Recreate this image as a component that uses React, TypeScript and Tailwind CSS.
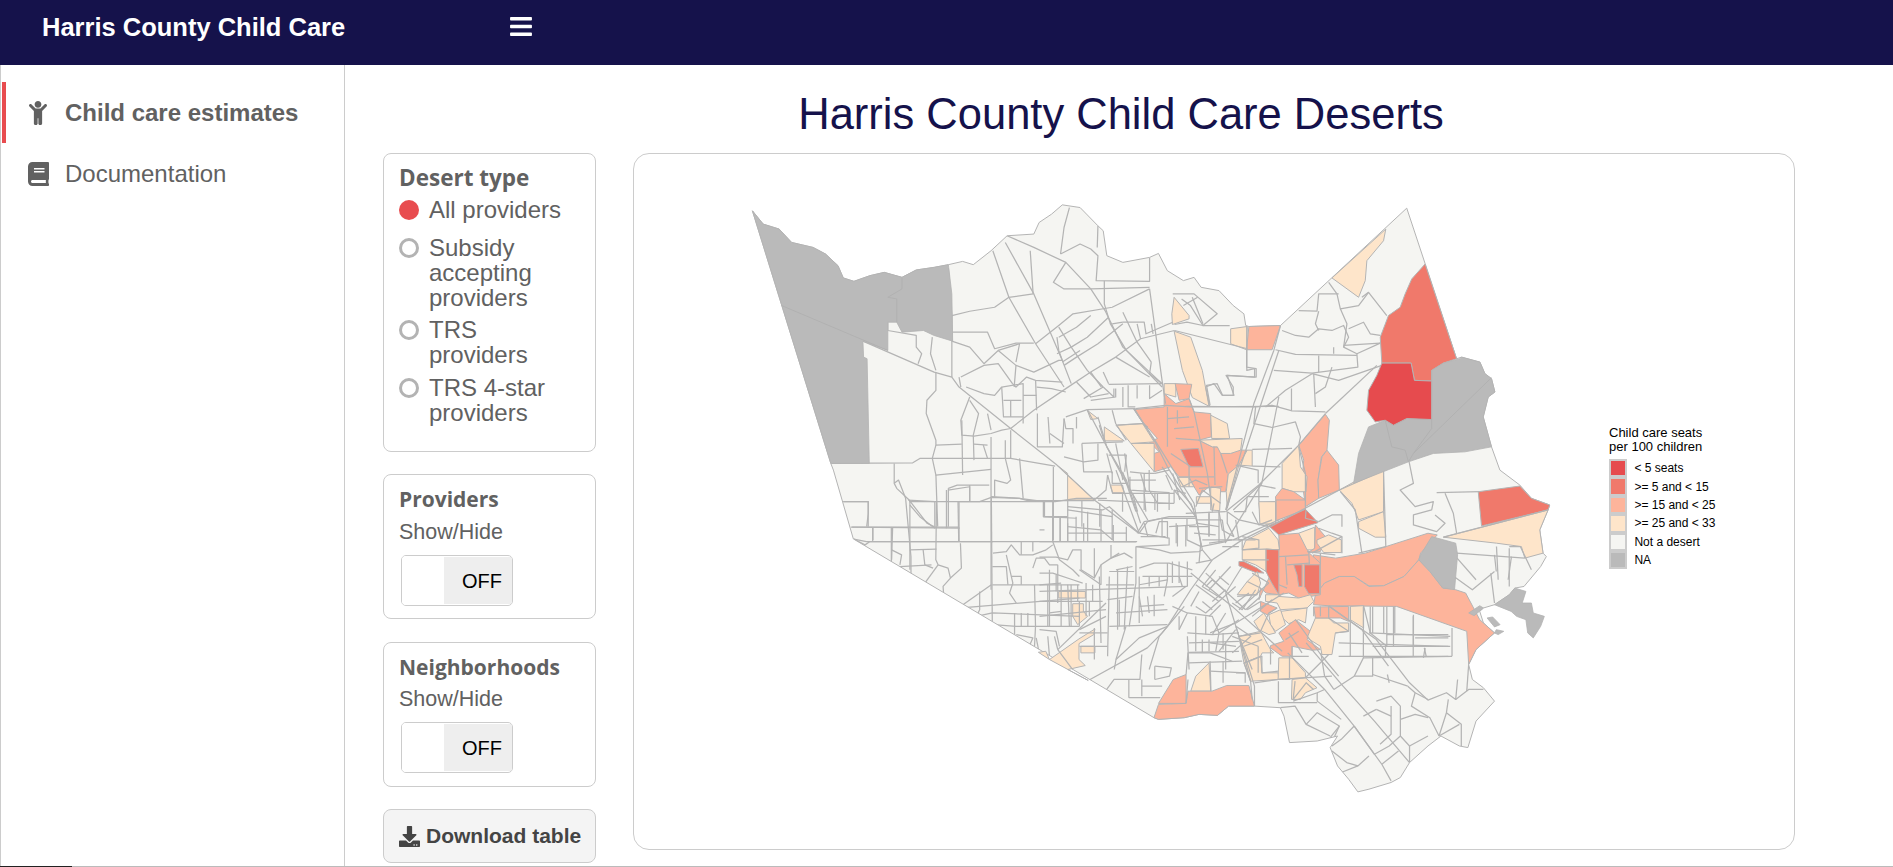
import { FaBars, FaBook, FaChild, FaDownload } from "react-icons/fa";

// reference crops the map was traced from: [originX, originY, scaleX, scaleY]
const ZONES = {
  a: [720, 190, 2.8, 3],
  b: [1100, 190, 3, 3],
  c: [1000, 480, 2.7, 3],
  d: [1040, 470, 3, 3],
  e: [1190, 500, 3, 3],
  f: [820, 470, 3, 3],
} as const;
type Zone = keyof typeof ZONES;

const RED = "#e64b4e";
const SALMON = "#f0796b";
const LIGHT = "#fdb49b";
const PEACH = "#fee5ca";
const BASE = "#f5f5f2";
const NA = "#bababa";

function conv(zone: Zone, str: string): string[] {
  const [ox, oy, sx, sy] = ZONES[zone];
  return str.trim().split(/\s+/).map((p) => {
    const [x, y] = p.split(",").map(Number);
    return `${(ox + x / sx).toFixed(1)} ${(oy + y / sy).toFixed(1)}`;
  });
}
const line = (zone: Zone, str: string) => "M" + conv(zone, str).join("L");
const poly = (zone: Zone, str: string) => line(zone, str) + "Z";

const OUTLINE =
  "M" +
  [
    ...conv("a", "90,60 120,100 165,115 200,155 260,170 295,190 330,225 345,262 375,272 420,255 460,245 510,260 550,238 600,230 640,222 680,212 710,222 760,180 805,135 880,130 895,95 930,70 960,42 1010,50 1060,105 1075,120 1085,195 1130,215 1205,200 1230,188 1255,240 1300,270 1330,260 1350,290 1400,300 1440,345 1470,370 1475,405"),
    ...conv("b", "450,408 545,405 925,52 1075,505 1090,500 1145,515 1160,550 1180,565 1190,605 1170,620 1155,680 1180,770 1205,840 1265,885 1300,925 1355,945 1350,960 1325,1020 1335,1090 1345,1100"),
    ...conv("c", "1465,260 1420,320 1395,325 1380,345 1340,375 1310,385 1300,395 1310,430 1340,460 1290,510 1270,555 1280,600 1310,625 1340,665 1290,725 1268,805 1245,800 1195,770 1160,800 1110,850 1085,895 1060,910 1000,930 970,938 945,900 915,860 895,805 915,770 860,785 785,790 770,710 760,685 690,680 620,680 590,708 540,705 500,715 430,720 418,715"),
    ...conv("f", "100,207 40,0"),
    ...conv("a", "310,820"),
  ].join("L") +
  "Z";

const FILLS: [Zone, string, string][] = [
  // north east
  ["b", SALMON, "980,220 1075,505 1035,518 1000,540 1000,572 948,570 938,518 850,518 845,440 870,375 905,350 920,310 940,265"],
  ["b", SALMON, "1140,905 1265,888 1300,925 1355,945 1350,960 1150,1008"],
  ["b", PEACH, "1350,960 1325,1020 1335,1090 1280,1105 1270,1070 1195,1060 1035,1042"],
  ["b", PEACH, "700,262 862,115 855,150 805,210 800,270 780,320"],
  ["b", LIGHT, "450,408 545,405 520,478 443,478"],
  ["b", PEACH, "395,415 445,408 443,478 395,460"],
  ["b", PEACH, "225,320 270,375 270,385 220,402 218,370"],
  ["b", PEACH, "225,422 275,440 310,540 330,648 280,622 250,540"],
  ["b", LIGHT, "600,765 680,672 692,690 685,780 668,800 658,870 660,925 620,950 610,870 615,810"],
  ["b", LIGHT, "685,780 720,825 722,900 660,925 658,870 670,800"],
  ["b", PEACH, "550,820 600,765 605,830 625,860 622,905 585,905 550,895"],
  ["b", LIGHT, "530,920 550,895 585,905 620,930 620,960 535,990"],
  ["b", PEACH, "480,938 530,935 530,995 510,1010 485,990"],
  ["b", PEACH, "722,900 830,840 855,840 855,965 780,990 760,940"],
  ["b", PEACH, "780,995 855,965 862,1042 830,1042 780,1015"],
  // north central cluster
  ["b", LIGHT, "105,658 195,650 195,610 230,640 270,625 285,665 335,670 337,740 298,750 340,770 360,770 365,790 395,790 420,780 445,780 420,825 388,852 380,905 365,905 330,890 300,915 285,890 270,860 240,860 215,830 165,845 165,790 180,785 150,755 175,745 125,690"],
  ["b", PEACH, "50,705 130,700 165,755 95,760"],
  ["b", PEACH, "95,760 165,760 165,845"],
  ["b", PEACH, "15,710 75,752 15,752"],
  ["b", PEACH, "335,675 385,700 392,745 338,745"],
  ["b", PEACH, "300,750 430,745 425,780 395,790 365,790 355,770 340,770"],
  ["b", PEACH, "195,580 230,580 230,620 195,610"],
  ["b", LIGHT, "228,580 278,582 270,625 240,630"],
  ["b", SALMON, "245,778 298,775 312,830 270,830"],
  ["b", PEACH, "445,780 460,780 460,828 420,825"],
  ["b", PEACH, "388,852 420,825 385,955 382,905"],
  ["b", PEACH, "335,890 365,895 362,962 335,960"],
  ["b", PEACH, "292,920 335,920 335,940 292,940"],
  ["b", PEACH, "235,862 268,862 285,890 245,890"],
  ["b", PEACH, "33,885 70,885 75,908 40,908"],
  ["a", PEACH, "945,825 1050,930 975,930 975,850"],
  ["a", PEACH, "1030,660 1060,685 1040,688"],
  // east central, the two big tracts reach the coast
  ["c", LIGHT, "850,225 910,235 990,220 1160,160 1185,165 1140,220 1135,240 1095,290 1040,318 1000,318 960,290 920,290 880,310 855,345 850,300"],
  ["c", LIGHT, "1000,320 1040,318 1095,290 1135,240 1165,275 1200,325 1235,330 1262,340 1300,420 1340,460 1290,510 1270,555 1265,455 1075,380 890,378 850,375 855,345 880,310 920,290 960,290"],
  ["e", LIGHT, "262,0 350,0 350,28 262,62"],
  ["e", PEACH, "210,5 260,5 260,72 213,72"],
  ["e", PEACH, "170,122 240,85 268,120 272,150 232,148 160,150"],
  ["e", PEACH, "160,150 232,148 232,215 200,195 160,180"],
  ["e", LIGHT, "270,105 330,100 362,160 395,190 395,285 365,290 330,295 300,280 270,285 232,215 232,148 272,150"],
  ["e", SALMON, "240,78 350,28 388,68 270,105"],
  ["e", SALMON, "232,148 270,150 270,285 250,255 232,215"],
  ["e", SALMON, "150,185 165,185 205,205 225,220 200,218 150,198"],
  ["e", SALMON, "315,195 340,195 340,260 330,260 325,225"],
  ["e", SALMON, "347,195 393,195 393,282 360,282 347,260"],
  ["e", PEACH, "330,100 378,82 378,150 355,150"],
  ["e", LIGHT, "380,75 410,110 395,155 358,158 378,145"],
  ["e", PEACH, "385,120 420,105 458,120 458,158 405,158 385,130"],
  ["e", LIGHT, "210,300 240,235 270,285 232,280 215,265"],
  ["e", PEACH, "230,285 270,285 270,290 330,295 365,285 375,305 355,325 275,330 265,310 230,305"],
  ["e", PEACH, "275,335 355,325 350,370 330,360 300,372 275,350"],
  ["e", LIGHT, "215,305 265,325 235,345 215,335"],
  ["e", PEACH, "240,345 275,330 290,375 260,395 245,375"],
  ["e", PEACH, "195,365 225,340 260,400 240,405 210,390"],
  ["e", PEACH, "175,245 205,215 215,250 205,285 145,285"],
  ["e", LIGHT, "270,400 320,360 365,395 355,420 395,450 370,452 310,440 310,470 280,470 245,445 245,438 285,425"],
  ["e", PEACH, "150,410 215,395 245,450 255,460 220,460 215,470 165,490"],
  ["e", PEACH, "380,355 420,355 435,370 480,370 480,395 440,400 430,465 400,465 395,440 355,415"],
  ["e", LIGHT, "375,322 480,320 480,365 455,355 420,355 380,355"],
  ["e", PEACH, "485,320 525,318 525,385 485,360"],
  ["e", PEACH, "165,490 215,470 220,520 268,520 270,540 185,545"],
  ["e", PEACH, "270,475 310,475 350,520 350,535 268,540"],
  ["e", PEACH, "310,540 350,535 385,565 350,580 335,600 308,600"],
  ["e", PEACH, "20,530 60,490 65,575 5,575"],
  // south
  ["c", LIGHT, "470,600 505,585 505,672 430,672"],
  ["c", LIGHT, "430,675 505,672 510,635 575,635 615,618 675,618 690,680 620,680 590,708 540,705 500,715 430,720 418,715"],
  ["c", PEACH, "135,540 215,478 258,448 255,465 215,492 215,540 232,558 185,570 240,603"],
  ["c", PEACH, "105,518 125,515 135,540"],
  ["c", PEACH, "220,500 258,500 258,520 220,520"],
  ["d", PEACH, "58,365 138,365 138,385 58,385"],
  ["d", PEACH, "100,402 132,402 132,425 145,440 115,465 100,440"],
];

const ROADS: Record<Zone, string[]> = {
  a: [
    "400,452 600,545 650,560 670,590 815,715 945,825 1050,930 1175,1030",
    "640,232 650,375 650,560",
    "650,375 700,362 770,350 810,320 878,310 870,180",
    "652,425 750,425 770,475 830,458 880,458",
    "800,155 880,310 960,510 985,580",
    "765,180 810,320 885,460 965,590",
    "805,135 880,170 970,215 1040,295 1080,360 1130,470 1240,580",
    "970,215 935,275 965,295 1040,295 1205,290",
    "955,190 965,110 980,50",
    "955,190 1010,160 1040,175 1060,195 1055,270 1205,272 1205,200",
    "1060,105 1058,170",
    "1078,270 1078,340 1095,400 1140,480 1240,590",
    "1205,295 1100,350 990,370 950,405 885,460",
    "1130,365 1170,455 1210,515",
    "1040,375 1000,410 950,440",
    "1090,380 1030,440 985,470 945,490",
    "1130,400 1060,460 1000,500 965,525",
    "950,410 985,470 1030,540 1075,590",
    "1130,395 1190,395 1195,430 1270,395",
    "1275,420 1180,445 1110,500 1040,545 970,595 880,660 815,715",
    "1275,420 1480,475",
    "1478,405 1478,540 1500,535 1500,560 1420,555 1440,590 1440,615 1410,615 1395,580 1365,585 1375,645",
    "1270,310 1330,310 1395,370 1355,405 1320,345 1295,325",
    "1325,320 1355,400",
    "1300,345 1340,320",
    "1430,405 1355,405 1310,395 1275,402",
    "1205,295 1240,570 1250,640",
    "1090,582 1240,580",
    "1105,595 1105,620 1075,590",
    "1145,585 1145,650 1165,650",
    "1170,585 1170,625",
    "1205,585 1205,625 1240,600",
    "1210,515 1205,550 1240,580",
    "1165,655 1250,645 1320,650 1568,648",
    "1030,658 1165,655",
    "970,680 1030,658",
    "1030,658 1090,780 1140,880 1200,990",
    "1060,680 1085,770 1140,870 1180,1000",
    "1160,655 1220,750 1330,940 1350,1070",
    "1568,480 1500,700 1420,960",
    "1568,620 1520,880 1440,960",
    "1520,880 1420,1055",
    "470,395 470,420 550,435 550,470 565,490 555,520",
    "595,440 590,490 605,540",
    "650,452 700,470 740,520 780,480 830,525 880,545 950,510 960,510",
    "675,560 740,525 780,520 820,580 830,590 860,560 885,570 960,575",
    "670,560 675,590",
    "780,480 840,460 830,515",
    "690,590 740,610 770,615 790,590 850,580 850,700",
    "790,590 795,680 850,680",
    "795,630 845,630",
    "815,630 815,680",
    "885,570 888,660",
    "850,615 888,615",
    "888,590 930,595 970,605",
    "1020,625 1075,590",
    "700,620 675,690 678,735 712,738 760,730 790,720 815,715",
    "700,630 725,670 710,735 712,810",
    "750,670 760,720",
    "605,545 605,600 580,630 578,670 605,750 605,765 678,762",
    "605,765 595,805 605,855 760,838",
    "678,690 680,855",
    "312,820 540,818 560,805 815,805 940,828",
    "760,740 760,1200",
    "815,720 815,805",
    "800,750 800,805 815,870 805,880 770,870 770,920",
    "738,765 750,805",
    "712,762 750,765",
    "840,805 850,925",
    "890,670 890,770 960,770 965,685",
    "920,680 925,760",
    "925,730 965,760",
    "965,685 970,715 990,715 990,760",
    "1015,760 1130,755",
    "965,800 1020,815 1060,810 1060,760",
    "1015,760 1020,845 1100,845",
    "1090,795 1140,795 1135,845",
    "1100,845 1100,880 1140,880",
    "1150,845 1190,850 1220,850",
    "1220,850 1260,840",
    "1190,850 1190,960",
    "1150,860 1150,900 1260,908 1260,960",
    "1220,908 1220,960",
    "1060,930 1260,940",
    "975,960 1100,980",
    "1015,930 1015,1010",
    "1065,940 1065,1010",
    "1100,960 1100,1050",
    "1140,1010 1140,1055",
    "488,820 488,880 500,870 520,925 535,1100 535,1200",
    "488,880 495,895 530,930 580,1000 600,1010",
    "345,935 415,935 415,1010",
    "370,1012 670,1012",
    "375,1048 410,1055 1170,1055",
    "530,935 940,935 1000,925 1085,925",
    "640,895 640,1010",
    "605,855 610,1010",
    "700,885 700,935",
    "640,895 665,885 755,885",
    "670,935 670,1055",
    "760,920 840,925 910,935",
    "910,935 910,980 1000,985",
    "935,830 935,1050",
    "975,1000 975,1055",
    "1020,1000 1020,1055",
    "975,1030 1140,1030",
    "428,1012 428,1050",
    "480,1012 480,1130",
    // denser blocks added after comparing
    "830,525 825,590",
    "960,510 950,480 945,440",
    "1010,480 960,515",
    "1180,445 1170,400",
    "1100,400 1130,395",
    "1210,400 1215,430",
    "1110,500 1205,560",
    "1075,545 1090,580",
    "1040,545 1070,590",
    "1000,575 1040,620 1090,610",
    "1040,630 1110,620 1110,595",
    "1130,590 1130,650",
    "1100,660 1110,700 1140,750",
    "1115,705 1185,700 1200,710",
    "1000,715 1000,680",
    "1110,760 1130,870",
    "1085,790 1100,850",
    "1135,790 1150,900",
    "1180,850 1195,905",
    "1240,830 1280,890 1320,940",
    "1270,850 1290,930",
    "1170,1030 1190,995 1240,985 1335,985",
    "1240,985 1240,1040",
    "1280,1000 1280,1060",
    "1180,1040 1250,1040",
    "1190,1000 1200,1040",
    "1310,985 1310,1050 1350,1070",
    "1335,1000 1400,1010",
    "1400,960 1400,1060",
    "1350,1070 1420,1055",
    "1440,1050 1568,990",
  ],
  b: [
    "550,420 590,435 630,440 660,415 700,420 735,405 750,440 735,470 775,490",
    "600,360 655,362 660,310 720,310",
    "690,275 715,310 725,355 780,345 810,305",
    "660,362 650,400 660,420",
    "725,355 745,400 735,470",
    "790,320 810,305 865,375",
    "750,415 795,395 815,430 845,435",
    "735,465 845,458",
    "775,490 845,458",
    "775,490 778,530 640,548 525,540",
    "530,478 590,492 775,495",
    "660,495 660,545",
    "705,470 705,490",
    "443,478 443,530 472,535 472,560 385,555 405,615 370,615 345,580 320,590 332,650",
    "545,405 525,480 465,640 380,960",
    "850,525 720,570 640,550",
    "640,550 560,600 500,650",
    "645,550 650,650",
    "700,530 680,590 650,610",
    "578,595 578,660",
    "680,670 835,525",
    "260,648 470,650 520,645 580,662 680,665",
    "470,650 465,700 520,712 590,695 605,740 600,765",
    "680,670 600,765 480,885 380,965",
    "460,778 580,775",
    "460,828 545,830",
    "410,825 478,840 478,880",
    "480,885 530,895",
    "480,885 480,935",
    "512,1012 722,900 925,810",
    "932,815 945,880 905,900 950,950 1005,935 1000,960 945,975 945,1005 1015,1025 1040,1000 1010,975",
    "855,840 862,1070",
    "1015,908 1145,905",
    "1040,910 1065,970 1075,1030",
    "1035,1042 1350,960",
    "622,960 620,985 660,995",
    "725,905 770,960 790,1090",
    "660,995 700,975 730,975 730,1010",
    "780,1090 862,1070",
    "1075,1090 1280,1105",
    "1195,1070 1200,1170",
    "1240,1100 1230,1170",
    "205,650 205,770",
    "235,660 235,700",
    "205,685 270,680",
    "225,715 285,710",
    "230,745 300,750",
    "285,665 325,850 340,960",
    "270,625 285,665",
    "215,790 275,830",
    "270,830 270,890",
    "300,895 370,890",
    "345,770 348,885",
    "365,790 385,850",
    "270,860 345,860",
    "105,655 165,750 205,830 285,960",
    "0,705 15,752",
    "600,770 620,850 620,950",
    "660,1015 700,1030 730,1040 730,1090",
    "640,1090 730,1040",
  ],
  c: [
    "890,378 1020,480 1110,610 1160,662 1210,640 1235,660 1240,600",
    "780,520 880,630 960,740 1035,855 1060,905",
    "830,490 930,620 1015,725 1110,850",
    "985,380 985,535 960,590",
    "985,535 1225,530",
    "1225,445 1225,530",
    "1000,460 1220,470",
    "1010,380 1010,460",
    "1040,380 1040,460",
    "1070,380 1070,460",
    "1120,410 1120,530",
    "1010,500 1220,500",
    "1045,500 1045,530",
    "1150,505 1155,530",
    "1010,535 1010,590 960,590",
    "1010,585 1105,620",
    "1050,585 1055,610",
    "1105,620 1125,640 1115,680 1165,715 1190,770",
    "1125,640 1160,660",
    "1215,660 1210,700 1190,770",
    "1235,660 1270,630 1310,630",
    "1270,555 1265,635",
    "1210,700 1250,735 1250,800",
    "1190,770 1245,735",
    "1020,665 1060,650 1085,680 1085,770 1055,800 1015,825 960,740",
    "1060,680 1060,765 1030,795",
    "1020,690 1060,710",
    "985,710 1020,690",
    "1085,720 1125,705 1160,715",
    "1085,770 1110,800 1160,770",
    "1110,850 1110,800",
    "1035,855 1080,815",
    "760,685 800,680 830,735 895,770",
    "830,735 860,700 920,740 895,775",
    "795,665 860,640 880,630",
    "860,640 860,665 925,720",
    "920,740 895,800",
    "960,740 925,780 900,800",
    "900,815 940,850 970,860 1000,830",
    "970,860 925,880",
    "755,605 755,670 860,670",
    "785,530 785,600 755,600",
    "690,610 755,600",
    "870,520 880,590 905,630",
    "905,630 960,590",
    "240,603 400,505 440,460 500,380",
    "290,630 310,600 380,600 385,525",
    "350,655 350,600",
    "420,560 465,565 460,590 420,600",
    "420,560 420,600",
    "385,620 440,620",
    "350,655 435,655",
    "385,600 385,650",
    "505,585 510,520 570,520 630,545",
    "570,575 665,580",
    "605,545 605,610",
    "630,520 680,470 640,440",
    "665,550 710,530 710,580 755,575",
    "640,440 690,620 690,680",
    "570,460 640,430 770,340",
    "1230,290 1280,330 1340,275",
    "1330,280 1340,370",
    "1380,200 1410,200 1440,270",
    "1340,225 1345,275",
    "1380,205 1380,320",
    "1235,230 1290,300",
    "570,545 572,635",
    "510,600 505,672",
    "800,605 795,660 830,610 850,630",
    "640,580 665,580 665,610",
    "570,490 640,500",
    "700,500 700,580",
    "630,470 700,500",
    "605,460 605,510",
  ],
  d: [
    "0,92 165,92",
    "12,92 12,140 85,140",
    "85,110 190,120 210,110 300,190",
    "85,90 85,215",
    "40,140 40,215",
    "62,140 62,215",
    "85,170 185,180 220,210",
    "110,140 110,215",
    "185,120 185,215",
    "145,125 145,215",
    "222,165 222,215 290,215",
    "0,215 290,215",
    "0,262 50,262 85,270 100,240 125,240 125,300 165,325 185,285 215,265 255,250 280,265",
    "165,235 165,325",
    "215,225 215,265 240,250",
    "20,240 40,225",
    "290,230 290,340 270,470",
    "300,190 390,205 390,225 290,230",
    "300,190 325,155 390,140 470,140",
    "350,190 360,155 385,155 385,205",
    "390,170 470,165",
    "415,165 415,230",
    "440,165 440,230",
    "290,230 360,240 395,250 480,245 490,240",
    "300,295 345,280 390,280 460,300",
    "385,280 385,330 375,380",
    "310,320 460,320",
    "400,275 400,340",
    "420,275 420,340",
    "445,275 445,350",
    "455,100 470,140 490,240 515,270",
    "405,60 450,115 470,140",
    "520,270 610,210",
    "440,130 560,125",
    "565,125 565,160 585,200",
    "510,125 510,200",
    "540,125 550,180 585,200",
    "610,210 690,170",
    "520,270 455,360 385,470 360,500 330,600",
    "0,310 40,310 100,330 130,340",
    "0,395 190,395",
    "0,365 445,350",
    "65,345 65,470",
    "0,440 200,420",
    "95,345 95,470",
    "30,300 30,470",
    "140,340 140,440",
    "180,320 185,520",
    "210,320 205,560",
    "235,300 235,480",
    "265,290 255,480",
    "0,480 50,485 60,530",
    "55,540 200,400",
    "55,540 100,600",
    "185,285 185,345",
    "210,305 285,305",
    "200,345 285,345",
    "205,390 280,380",
    "300,380 310,440",
    "325,380 330,430",
    "345,375 345,440",
    "230,430 385,420",
    "210,470 385,465",
    "120,490 205,490",
    "165,475 165,570",
    "120,530 205,530",
    "260,470 230,570",
    "455,310 580,410 730,545",
    "560,370 600,500 640,600",
    "590,350 500,430 470,410",
    "470,345 540,395",
    "500,310 620,420",
    "530,300 490,350 545,385",
    "575,290 510,360",
    "610,290 560,370",
    "480,365 455,410",
    "445,430 520,440 540,490",
    "445,490 520,495 600,490",
    "385,470 300,505 230,570 225,600",
    "445,500 450,600",
    "450,520 600,515",
    "450,548 600,545",
    "540,490 530,545",
    "600,450 540,490",
    "400,410 445,430 420,480",
    "610,270 690,270",
    "640,310 690,340",
    "610,200 660,210 660,235 610,240",
    "490,210 610,210",
    "330,60 355,100 405,100",
    "205,15 220,70 405,70",
    "250,5 290,125",
    "315,70 320,125",
    "355,70 355,125",
    "0,180 15,180",
    "115,345 115,395",
    "160,345 160,395",
    "50,315 50,365",
    "0,345 65,340",
    "120,300 185,345",
    "150,440 150,395",
    "200,440 120,480",
    "120,395 120,470",
    "30,430 65,425",
    "385,330 300,345",
    "300,320 300,460",
    "330,320 330,350",
    "360,320 360,350",
    "420,320 430,350",
    "230,300 280,290",
    "300,410 375,405",
    "240,390 240,470",
    "400,380 440,350",
    "420,440 420,480",
    "470,440 470,490",
    "500,440 500,495",
    "560,430 520,495",
    "590,480 540,545",
    "470,490 470,545",
    "490,510 490,548",
    "510,510 510,545",
    "560,520 560,600",
    "450,580 610,575",
    "500,350 520,330 560,365",
    "540,320 570,345",
    "520,395 560,360",
    "490,395 520,420",
    "545,405 510,440",
    "590,400 630,370",
    "600,420 690,340",
    "620,420 665,380",
    "640,440 700,390",
    "230,0 300,190",
    "165,90 200,60 205,15",
    "250,70 250,125",
    "280,70 295,125",
    "405,100 405,60 440,70",
    "470,110 490,60 545,100",
    "520,125 525,100",
    "585,125 620,125 625,80 690,80",
    "640,125 660,165 700,150",
    "565,125 600,150 690,170",
    "430,50 470,30 505,45",
    "270,30 350,30",
    "330,0 330,60",
    "380,15 400,60",
  ],
  e: [
    "355,155 440,165",
    "270,170 360,165",
    "290,170 295,255",
    "270,255 295,265",
    "295,195 362,190",
    "360,155 362,195",
    "395,195 395,160",
    "375,320 375,350",
    "395,320 395,350",
    "420,320 420,355 480,395",
    "420,318 520,390 600,500",
    "440,400 480,395",
    "320,360 400,470 450,530",
    "310,440 310,470 360,470",
    "245,445 245,495",
    "165,490 185,545",
    "150,410 185,545 190,600",
    "270,540 430,530",
    "595,320 595,440",
    "615,320 615,440",
    "675,345 675,440",
    "595,405 780,405",
    "680,415 780,415",
    "450,430 780,440",
    "450,470 780,470",
    "485,320 485,470",
    "525,318 545,400 595,440",
    "545,320 545,400",
    "710,445 705,475",
    "300,400 340,460",
    "330,395 290,420",
    "215,395 240,340 265,325",
    "420,465 350,535",
    "200,270 160,330 130,310",
    "175,245 215,265",
    "145,290 205,285",
    "175,330 215,305",
    "215,400 150,410",
    "165,440 220,420",
    "20,60 100,60",
    "60,40 60,110",
    "100,60 110,130",
    "140,60 150,120 200,120",
    "0,80 60,80",
    "15,100 80,105",
    "60,130 130,120",
    "160,120 160,150",
    "35,130 30,190",
    "20,190 70,180",
    "100,140 150,140",
  ],
  f: [
    "70,95 145,95 145,130 140,170",
    "92,172 420,175",
    "100,207 135,225 150,215 520,215",
    "158,172 158,215",
    "218,172 215,270",
    "270,90 270,300",
    "265,90 345,95 345,175",
    "270,105 300,140 345,175",
    "350,95 348,270 355,285 385,295 392,325 370,350 372,380",
    "380,60 380,175",
    "385,60 450,50 450,95",
    "415,95 417,215",
    "420,95 480,95 515,82 600,85 625,92 705,92",
    "515,82 518,480",
    "270,240 350,238",
    "310,240 315,285 340,295",
    "215,240 245,255 240,285",
    "240,290 335,285",
    "355,285 315,340",
    "422,220 425,295 392,325",
    "422,410 515,345",
    "425,415 780,385",
    "480,365 480,420 470,440",
    "470,440 518,430 780,440",
    "520,465 590,470 780,470",
    "518,290 560,290 565,345",
    "518,345 780,345",
    "520,250 560,245 575,225 600,255 640,255 680,240",
    "605,215 605,255",
    "640,215 640,245",
    "560,255 580,340 570,370 590,400",
    "575,320 605,320 605,345",
    "585,430 585,500",
    "605,430 605,470",
    "625,430 625,470",
    "645,345 648,470 645,530",
    "685,345 685,470",
    "715,285 715,400",
    "640,295 650,265 675,265 690,285 715,285",
    "700,215 720,270 760,300 780,320",
    "745,345 750,470",
    "590,495 640,505 625,540",
    "650,505 660,555",
    "685,500 690,560",
    "705,500 715,540",
    "672,95 672,140 745,142",
    "700,92 700,215",
    "722,140 722,215",
  ],
};

const GRAYS: [Zone, string][] = [
  ["a", "90,60 120,100 165,115 200,155 260,170 295,190 330,225 345,262 375,272 420,255 460,245 510,260 550,238 600,230 640,222 650,310 652,452 600,435 570,420 510,425 495,395 470,395 470,480 400,452 402,500 412,505 418,820 310,820"],
  ["b", "1000,540 1035,518 1085,505 1090,500 1145,515 1160,550 1180,565 1190,605 1170,620 1155,680 1180,770 1100,785 1005,790 930,815 765,880 780,790 810,710 860,690 885,705 925,685 1000,688"],
  ["c", "1140,225 1170,170 1235,190 1240,225 1232,328 1200,325 1165,275 1135,240"],
  ["c", "1395,325 1425,335 1415,370 1440,370 1445,400 1475,410 1465,440 1445,475 1430,460 1425,420 1400,410 1385,395 1340,375 1380,345"],
  ["c", "1300,378 1270,400 1285,408 1310,385"],
  ["c", "1320,415 1335,412 1355,435 1340,442"],
  ["c", "1345,450 1365,455 1350,465 1340,460"],
];

const GRAY_LINES: [Zone, string][] = [
  ["a", "172,345 470,480"],
  ["a", "510,262 510,295 470,320 495,325 495,395"],
  ["b", "1000,688 1000,715 945,790 930,815"],
  ["b", "1180,562 945,790"],
  ["b", "860,690 880,770 920,780 930,815"],
];

function HarrisMap() {
  return (
    <svg viewBox="634 153 1162 697" className="block w-full h-full">
      <clipPath id="county">
        <path d={OUTLINE} />
      </clipPath>
      <path d={OUTLINE} fill={BASE} stroke="#b4b4b4" strokeWidth="1" />
      <g stroke="#b4b4b4" strokeWidth="1" strokeLinejoin="round">
        {FILLS.map(([z, fill, pts], i) => (
          <path key={i} d={poly(z, pts)} fill={fill} />
        ))}
      </g>
      <g clipPath="url(#county)" fill="none" stroke="#b4b4b4" strokeWidth="1.25" strokeLinejoin="round">
        {(Object.keys(ROADS) as Zone[]).flatMap((z) =>
          ROADS[z].map((pts, i) => <path key={z + i} d={line(z, pts)} />),
        )}
      </g>
      <g stroke="#b3b3b3" strokeWidth="0.8" strokeLinejoin="round">
        {GRAYS.map(([z, pts], i) => (
          <path key={i} d={poly(z, pts)} fill={NA} />
        ))}
      </g>
      <path
        d={poly("b", "850,518 938,518 948,570 1000,572 1000,688 925,685 885,705 860,690 830,695 805,660 810,600 835,555")}
        fill={RED}
        stroke="#b4b4b4"
        strokeWidth="1"
      />
      <g fill="none" stroke="#aeaeae" strokeWidth="0.8">
        {GRAY_LINES.map(([z, pts], i) => (
          <path key={i} d={line(z, pts)} />
        ))}
      </g>
    </svg>
  );
}

const LEGEND = [
  { color: RED, label: "< 5 seats" },
  { color: SALMON, label: ">= 5 and < 15" },
  { color: LIGHT, label: ">= 15 and < 25" },
  { color: PEACH, label: ">= 25 and < 33" },
  { color: BASE, label: "Not a desert" },
  { color: NA, label: "NA" },
];

function Toggle() {
  return (
    <div className="ml-[2px] flex h-[51px] w-[112px] overflow-hidden rounded-[5px] border border-[#ccc]">
      <div className="w-[42px] bg-white" />
      <div className="my-px flex flex-1 items-center justify-center bg-[#eee] pl-[8px] text-[20px] text-black">OFF</div>
    </div>
  );
}

function ToggleCard({ title, mt, labelMt }: { title: string; mt: string; labelMt: string }) {
  return (
    <div className={`h-[145px] rounded-[8px] border border-[#ccc] px-[15px] pt-[10px] ${mt}`}>
      <div className="font-['Open_Sans'] text-[21px] leading-[28px] font-bold text-[#616161]">{title}</div>
      <div className={`text-[21.5px] leading-[24px] text-[#616161] ${labelMt}`}>Show/Hide</div>
      <div className="mt-[11px]">
        <Toggle />
      </div>
    </div>
  );
}

function RadioRow({ label, checked, mt }: { label: string[]; checked?: boolean; mt: string }) {
  return (
    <div className={`flex gap-[10px] ${mt}`}>
      {checked ? (
        <span className="mt-[3px] h-[20px] w-[20px] shrink-0 rounded-full bg-[#e84c4f]" />
      ) : (
        <span className="mt-[3px] h-[20px] w-[20px] shrink-0 rounded-full border-[3px] border-[#b3b3b3]" />
      )}
      <div className="text-[24px] leading-[25px] text-[#616161]">
        {label.map((l) => (
          <div key={l}>{l}</div>
        ))}
      </div>
    </div>
  );
}

export default function App() {
  return (
    <div className="flex h-[867px] flex-col overflow-hidden bg-white font-['Liberation_Sans',Arial,sans-serif]">
      <header className="flex h-[65px] shrink-0 bg-[#15124b] text-white">
        <div className="w-[510px] pl-[42px] pt-[9px] text-[25.5px] leading-[36px] font-bold">Harris County Child Care</div>
        <FaBars className="mt-[14px] h-[25px] w-[22px]" />
      </header>

      <div className="flex min-h-0 flex-1">
        <aside className="w-[345px] shrink-0 border-x border-[#ccc] pl-px pt-[17px] text-[#616161]">
          <div className="flex h-[61px] items-center border-l-[4px] border-[#e84c4f] pl-[22px]">
            <FaChild className="h-[24px] w-[20px]" />
            <span className="ml-[17px] text-[24px] font-bold">Child care estimates</span>
          </div>
          <div className="mt-[1px] flex h-[60px] items-center pl-[26px]">
            <FaBook className="h-[24px] w-[21px]" />
            <span className="ml-[16px] text-[24px]">Documentation</span>
          </div>
        </aside>

        <main className="flex min-w-0 flex-1 flex-col pl-[38px]">
          <h1 className="w-[1476px] pt-[23px] text-center text-[43.5px] leading-[52px] text-[#15124b]">
            Harris County Child Care Deserts
          </h1>
          <div className="mt-[13px] flex gap-[37px]">
            <div className="w-[213px] shrink-0">
              <div className="h-[299px] rounded-[8px] border border-[#ccc] px-[15px] pt-[7px]">
                <div className="font-['Open_Sans'] text-[22.5px] leading-[34px] font-bold text-[#616161]">Desert type</div>
                <RadioRow label={["All providers"]} checked mt="mt-[2px]" />
                <RadioRow label={["Subsidy", "accepting", "providers"]} mt="mt-[13px]" />
                <RadioRow label={["TRS", "providers"]} mt="mt-[7px]" />
                <RadioRow label={["TRS 4-star", "providers"]} mt="mt-[8px]" />
              </div>
              <ToggleCard title="Providers" mt="mt-[22px]" labelMt="mt-[7px]" />
              <ToggleCard title="Neighborhoods" mt="mt-[23px]" labelMt="mt-[6px]" />
              <button className="mt-[22px] flex h-[54px] w-full items-center rounded-[8px] border border-[#ccc] bg-[#f4f4f4] pl-[15px] text-[21px] font-bold text-[#444]">
                <FaDownload className="h-[21px] w-[21px]" />
                <span className="ml-[6px]">Download table</span>
              </button>
            </div>

            <div className="relative h-[697px] w-[1162px] shrink-0 overflow-hidden rounded-[16px] border border-[#ccc]">
              <HarrisMap />
              <div className="absolute left-[975px] top-[272px] leading-[14px] text-black">
                <div className="text-[13px]">Child care seats</div>
                <div className="text-[13px]">per 100 children</div>
                <div className="mt-[5px] text-[12px]">
                  {LEGEND.map((item) => (
                    <div key={item.label} className="flex h-[18.4px] items-center">
                      <span
                        className="h-[18.4px] w-[18.4px] border-2 border-[#ccc]"
                        style={{ backgroundColor: item.color }}
                      />
                      <span className="ml-[7px]">{item.label}</span>
                    </div>
                  ))}
                </div>
              </div>
            </div>
          </div>
        </main>
      </div>

      <div className="flex h-px shrink-0 bg-[#bbb]">
        <div className="w-[72px] bg-[#222]" />
      </div>
    </div>
  );
}
